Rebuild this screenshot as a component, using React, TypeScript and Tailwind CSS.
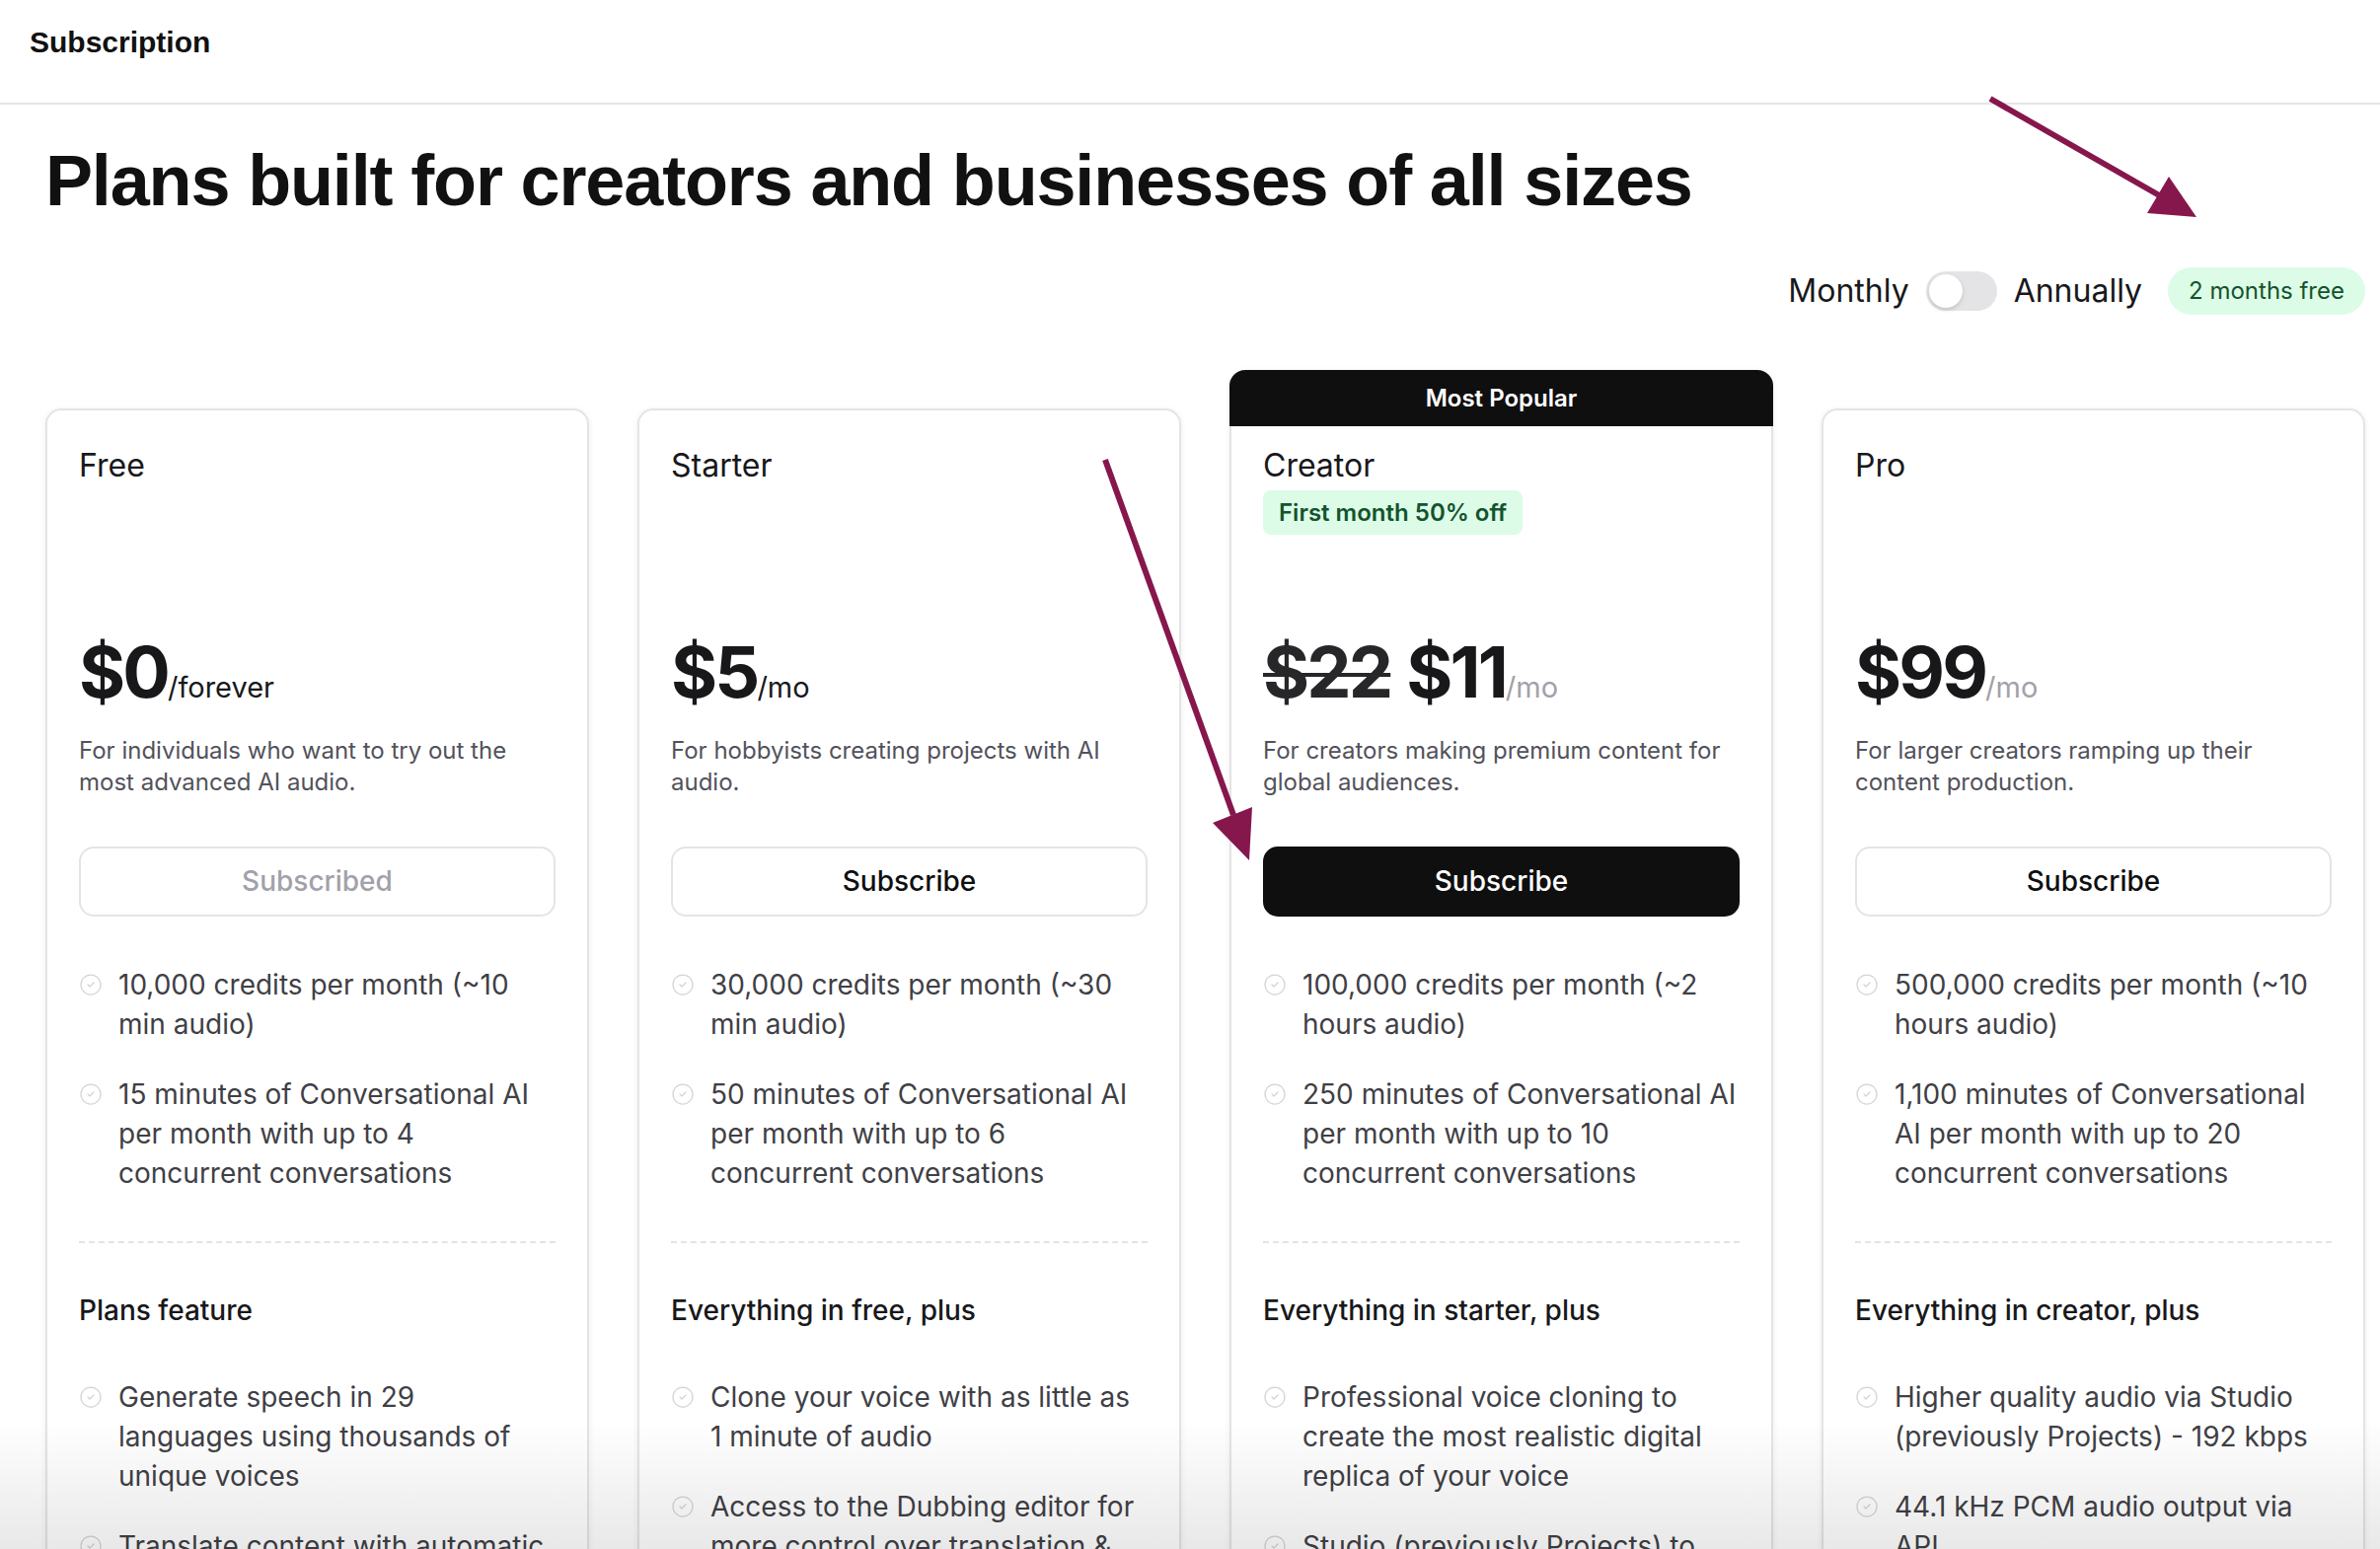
import { CircleCheck } from "lucide-react";

type Plan = {
  name: string;
  badge?: string;
  oldPrice?: string;
  price: string;
  period: string;
  periodMuted?: boolean;
  desc: string;
  button: string;
  buttonStyle: "disabled" | "outline" | "solid";
  popular?: boolean;
  features: string[];
  extrasTitle: string;
  extras: string[];
};

const plans: Plan[] = [
  {
    name: "Free",
    price: "$0",
    period: "/forever",
    desc: "For individuals who want to try out the most advanced AI audio.",
    button: "Subscribed",
    buttonStyle: "disabled",
    features: [
      "10,000 credits per month (~10 min audio)",
      "15 minutes of Conversational AI per month with up to 4 concurrent conversations",
    ],
    extrasTitle: "Plans feature",
    extras: [
      "Generate speech in 29 languages using thousands of unique voices",
      "Translate content with automatic dubbing",
      "Access to the API",
    ],
  },
  {
    name: "Starter",
    price: "$5",
    period: "/mo",
    desc: "For hobbyists creating projects with AI audio.",
    button: "Subscribe",
    buttonStyle: "outline",
    features: [
      "30,000 credits per month (~30 min audio)",
      "50 minutes of Conversational AI per month with up to 6 concurrent conversations",
    ],
    extrasTitle: "Everything in free, plus",
    extras: [
      "Clone your voice with as little as 1 minute of audio",
      "Access to the Dubbing editor for more control over translation & timing",
    ],
  },
  {
    name: "Creator",
    badge: "First month 50% off",
    oldPrice: "$22",
    price: "$11",
    period: "/mo",
    periodMuted: true,
    desc: "For creators making premium content for global audiences.",
    button: "Subscribe",
    buttonStyle: "solid",
    popular: true,
    features: [
      "100,000 credits per month (~2 hours audio)",
      "250 minutes of Conversational AI per month with up to 10 concurrent conversations",
    ],
    extrasTitle: "Everything in starter, plus",
    extras: [
      "Professional voice cloning to create the most realistic digital replica of your voice",
      "Studio (previously Projects) to create long-form audio",
    ],
  },
  {
    name: "Pro",
    price: "$99",
    period: "/mo",
    periodMuted: true,
    desc: "For larger creators ramping up their content production.",
    button: "Subscribe",
    buttonStyle: "outline",
    features: [
      "500,000 credits per month (~10 hours audio)",
      "1,100 minutes of Conversational AI per month with up to 20 concurrent conversations",
    ],
    extrasTitle: "Everything in creator, plus",
    extras: [
      "Higher quality audio via Studio (previously Projects) - 192 kbps",
      "44.1 kHz PCM audio output via API",
    ],
  },
];

function Feature({ text }: { text: string }) {
  return (
    <li className="flex gap-[16px]">
      <CircleCheck
        className="mt-[8px] h-[24px] w-[24px] shrink-0 text-[#d4d4d8]"
        strokeWidth={1.25}
      />
      <span>{text}</span>
    </li>
  );
}

function PlanCard({ plan }: { plan: Plan }) {
  const buttonClass =
    plan.buttonStyle === "solid"
      ? "bg-[#0f0f0f] text-white border-[#0f0f0f]"
      : plan.buttonStyle === "disabled"
        ? "bg-white text-[#a1a1aa] border-[#e4e4e7]"
        : "bg-white text-[#0f0f0f] border-[#e4e4e7]";

  return (
    <div
      className={`flex flex-col rounded-[16px] bg-white shadow-[0_1px_6px_rgba(0,0,0,0.07)] ${
        plan.popular
          ? "border-x-2 border-b-2 border-[#e4e4e7]"
          : "mt-[39px] border-2 border-[#e4e4e7]"
      }`}
    >
      {plan.popular && (
        <div className="-mx-[2px] flex h-[57px] items-center justify-center rounded-t-[16px] bg-[#0f0f0f] text-[24px] font-semibold text-white">
          Most Popular
        </div>
      )}
      <div
        className={`flex flex-col px-[32px] ${plan.popular ? "pt-[17px]" : "pt-[33px]"}`}
      >
        <div className="h-[196px]">
          <h2 className="text-[32px] leading-[45px] text-[#18181b]">{plan.name}</h2>
          {plan.badge && (
            <span className="mt-[3px] inline-flex h-[45px] items-center rounded-[8px] bg-[#dcfce7] px-[16px] text-[24px] font-semibold text-[#14532d]">
              {plan.badge}
            </span>
          )}
        </div>

        <div className="flex items-baseline text-[#18181b]">
          {plan.oldPrice && (
            <span className="mr-[16px] text-[72px] leading-[72px] font-bold tracking-[-0.04em] text-[#27272a] line-through decoration-4">
              {plan.oldPrice}
            </span>
          )}
          <span className="text-[72px] leading-[72px] font-bold tracking-[-0.04em] text-[#18181b]">
            {plan.price}
          </span>
          <span
            className={`text-[29px] ${plan.periodMuted ? "text-[#a1a1aa]" : "text-[#18181b]"}`}
          >
            {plan.period}
          </span>
        </div>

        <p className="mt-[26px] min-h-[64px] text-[24px] leading-[32px] text-[#52525b]">
          {plan.desc}
        </p>

        <button
          className={`mt-[49px] h-[71px] w-full rounded-[15px] border-2 text-[28px] font-medium ${buttonClass}`}
        >
          {plan.button}
        </button>

        <ul className="mt-[49px] flex flex-col gap-[31px] pr-[3px] text-[28px] leading-[40px] text-[#3f3f46]">
          {plan.features.map((f) => (
            <Feature key={f} text={f} />
          ))}
        </ul>

        <div className="mt-[49px] border-t-2 border-dashed border-[#e4e4e7]" />

        <h3 className="mt-[48px] text-[28px] leading-[40px] font-medium text-[#18181b]">
          {plan.extrasTitle}
        </h3>

        <ul className="mt-[48px] flex flex-col gap-[31px] pr-[3px] pb-[40px] text-[28px] leading-[40px] text-[#3f3f46]">
          {plan.extras.map((f) => (
            <Feature key={f} text={f} />
          ))}
        </ul>
      </div>
    </div>
  );
}

export default function App() {
  return (
    <div className="relative h-screen overflow-hidden bg-white font-['Inter',sans-serif]">
      <header className="h-[106px] border-b-2 border-[#e5e5e5] pt-[25px] pl-[30px]">
        <span className="font-['Liberation_Sans',Arial,sans-serif] text-[30px] leading-[36px] font-bold text-[#111]">
          Subscription
        </span>
      </header>

      <main className="pr-[15px] pl-[46px]">
        <h1 className="mt-[41px] font-['Liberation_Sans',Arial,sans-serif] text-[72px] leading-[72px] font-bold tracking-[-0.016em] text-[#111]">
          Plans built for creators and businesses of all sizes
        </h1>

        <div className="mt-[52px] flex h-[48px] items-center justify-end gap-[17px] text-[32px] text-[#18181b]">
          <span>Monthly</span>
          <span className="relative h-[40px] w-[72px] rounded-full bg-[#e4e4e7]">
            <span className="absolute top-[3px] left-[3px] h-[34px] w-[34px] rounded-full bg-white shadow-[0_2px_4px_rgba(0,0,0,0.15)]" />
          </span>
          <span>Annually</span>
          <span className="ml-[9px] flex h-[48px] items-center rounded-full bg-[#dcfce7] px-[21px] text-[24px] text-[#14532d]">
            2 months free
          </span>
        </div>

        <div className="mt-[56px] grid grid-cols-4 items-start gap-[49px]">
          {plans.map((p) => (
            <PlanCard key={p.name} plan={p} />
          ))}
        </div>
      </main>

      {/* bottom fade */}
      <div className="pointer-events-none absolute right-0 bottom-0 left-0 h-[130px] bg-gradient-to-b from-transparent to-[rgba(0,0,0,0.09)]" />

      {/* annotation arrows */}
      <svg
        className="pointer-events-none absolute top-0 left-0"
        width="2412"
        height="1570"
        viewBox="0 0 2412 1570"
      >
        <line x1="2017" y1="100" x2="2190" y2="199" stroke="#86174d" strokeWidth="6" />
        <polygon points="2226,220 2176,216 2198,179" fill="#86174d" />
        <line x1="1120" y1="466" x2="1250" y2="826" stroke="#86174d" strokeWidth="6" />
        <polygon points="1266,872 1229,834 1269,818" fill="#86174d" />
      </svg>
    </div>
  );
}
